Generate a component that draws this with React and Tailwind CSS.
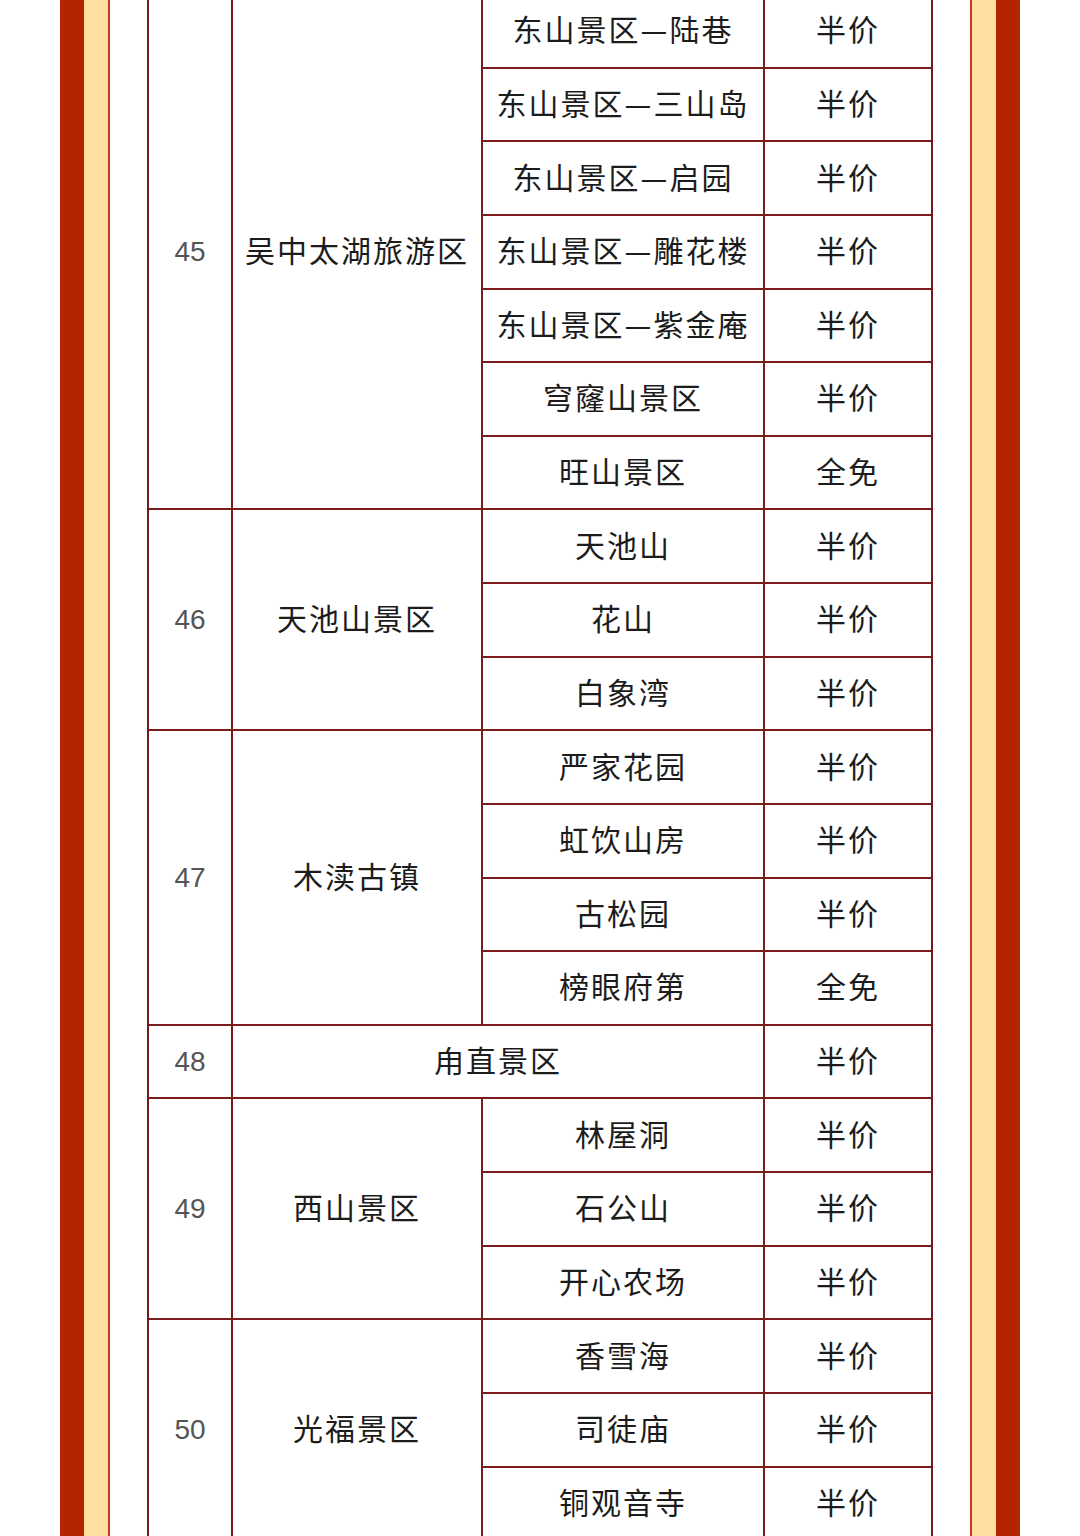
import React from "react";

const groups = [
  {
    no: "45",
    name: "吴中太湖旅游区",
    items: [
      ["东山景区—陆巷", "半价"],
      ["东山景区—三山岛", "半价"],
      ["东山景区—启园", "半价"],
      ["东山景区—雕花楼", "半价"],
      ["东山景区—紫金庵", "半价"],
      ["穹窿山景区", "半价"],
      ["旺山景区", "全免"],
    ],
  },
  {
    no: "46",
    name: "天池山景区",
    items: [
      ["天池山", "半价"],
      ["花山", "半价"],
      ["白象湾", "半价"],
    ],
  },
  {
    no: "47",
    name: "木渎古镇",
    items: [
      ["严家花园", "半价"],
      ["虹饮山房", "半价"],
      ["古松园", "半价"],
      ["榜眼府第", "全免"],
    ],
  },
  { no: "48", name: "甪直景区", single: "半价" },
  {
    no: "49",
    name: "西山景区",
    items: [
      ["林屋洞", "半价"],
      ["石公山", "半价"],
      ["开心农场", "半价"],
    ],
  },
  {
    no: "50",
    name: "光福景区",
    items: [
      ["香雪海", "半价"],
      ["司徒庙", "半价"],
      ["铜观音寺", "半价"],
    ],
  },
];

function Cell({ children, area, numeric }) {
  return (
    <div
      className={
        numeric
          ? "bg-white flex items-center justify-center text-[28px] text-[#555555] font-['Liberation_Sans',Arial,sans-serif]"
          : "bg-white flex items-center justify-center pb-[4px] text-[30px] tracking-[2px] text-[#1c1c1c] font-['Noto_Sans_CJK_SC','Noto_Sans',sans-serif]"
      }
      style={area}
    >
      {children}
    </div>
  );
}

function Table() {
  const cells = [];
  let row = 1;
  groups.forEach((g) => {
    const n = g.single ? 1 : g.items.length;
    cells.push(
      <Cell key={g.no + "n"} numeric area={{ gridRow: `${row} / span ${n}`, gridColumn: "1" }}>
        {g.no}
      </Cell>
    );
    if (g.single) {
      cells.push(
        <Cell key={g.no + "s"} area={{ gridRow: `${row}`, gridColumn: "2 / span 2" }}>
          {g.name}
        </Cell>
      );
      cells.push(
        <Cell key={g.no + "p"} area={{ gridRow: `${row}`, gridColumn: "4" }}>
          {g.single}
        </Cell>
      );
    } else {
      cells.push(
        <Cell key={g.no + "s"} area={{ gridRow: `${row} / span ${n}`, gridColumn: "2" }}>
          {g.name}
        </Cell>
      );
      g.items.forEach((it, i) => {
        cells.push(
          <Cell key={g.no + "a" + i} area={{ gridRow: `${row + i}`, gridColumn: "3" }}>
            {it[0]}
          </Cell>
        );
        cells.push(
          <Cell key={g.no + "b" + i} area={{ gridRow: `${row + i}`, gridColumn: "4" }}>
            {it[1]}
          </Cell>
        );
      });
    }
    row += n;
  });

  return (
    <div className="mt-[-7px] mx-auto w-[786px] bg-[#7a1c1c] p-[2px] grid gap-[2px] grid-cols-[82px_248px_280px_166px] auto-rows-[71.63px]">
      {cells}
    </div>
  );
}

export default function App() {
  return (
    <div className="w-[1080px] h-[1536px] overflow-hidden bg-white flex">
      <div className="w-[60px] shrink-0 bg-white" />
      <div className="w-[24px] shrink-0 bg-[#b42400]" />
      <div className="w-[24px] shrink-0 bg-[#ffe0a2]" />
      <div className="w-[2px] shrink-0 bg-[#c9381c]" />
      <div className="flex-1 bg-white overflow-hidden">
        <Table />
      </div>
      <div className="w-[2px] shrink-0 bg-[#c9381c]" />
      <div className="w-[24px] shrink-0 bg-[#ffe0a2]" />
      <div className="w-[24px] shrink-0 bg-[#b42400]" />
      <div className="w-[60px] shrink-0 bg-white" />
    </div>
  );
}
